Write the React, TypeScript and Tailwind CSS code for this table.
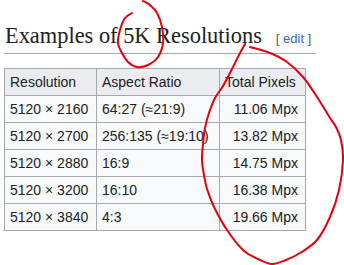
import React from 'react';

const rows = [
  ['5120 × 2160', '64:27 (≈21:9)', '11.06 Mpx'],
  ['5120 × 2700', '256:135 (≈19:10)', '13.82 Mpx'],
  ['5120 × 2880', '16:9', '14.75 Mpx'],
  ['5120 × 3200', '16:10', '16.38 Mpx'],
  ['5120 × 3840', '4:3', '19.66 Mpx'],
];

// hand-drawn marks, traced as point lists and smoothed
const smooth = (pts: number[][]) => {
  let d = `M${pts[0][0]},${pts[0][1]}`;
  for (let i = 0; i < pts.length - 1; i++) {
    const p0 = pts[i - 1] || pts[i];
    const p1 = pts[i];
    const p2 = pts[i + 1];
    const p3 = pts[i + 2] || p2;
    const c1 = [p1[0] + (p2[0] - p0[0]) / 6, p1[1] + (p2[1] - p0[1]) / 6];
    const c2 = [p2[0] - (p3[0] - p1[0]) / 6, p2[1] - (p3[1] - p1[1]) / 6];
    d += ` C${c1[0]},${c1[1]} ${c2[0]},${c2[1]} ${p2[0]},${p2[1]}`;
  }
  return d;
};

const ring1 = [
  [132, 13], [125, 18], [120, 30], [118, 43], [122, 53], [128, 62], [137, 67],
  [148, 65], [158, 57], [163, 43], [162, 27], [157, 13], [150, 5], [143, 1],
];

const ring2 = [
  [245, 44], [239, 55], [233, 67], [223, 86], [215, 98], [209, 113], [205, 128],
  [203, 144], [202, 160], [204, 175], [207, 189], [214, 207], [227, 230], [243, 250],
  [258, 259], [272, 264], [286, 260], [300, 253], [317, 240], [330, 217], [339, 190],
  [343, 160], [341, 140], [336, 127], [330, 118], [317, 97], [303, 77], [287, 62],
  [270, 53], [250, 47],
];

export default function App() {
  return (
    <div className="relative w-[344px] h-[265px] overflow-hidden bg-white text-[#202122]">
      <h2 className="ml-[4px] w-[312px] pt-[22px] leading-[28px] border-b border-[#a2a9b1] font-['Liberation_Serif',serif] text-[22.4px] font-normal pl-[1px]">
        Examples of 5K Resolutions
        <span className="ml-[14px] font-['Liberation_Sans',Arial,sans-serif] text-[13px] text-[#54595d]">
          [ <span className="text-[#3366cc]">edit</span> ]
        </span>
      </h2>

      <table className="mt-[14px] ml-[4px] border-collapse border border-[#a2a9b1] font-['Liberation_Sans',Arial,sans-serif] text-[14px] bg-[#f8f9fa]">
        <thead>
          <tr className="h-[27px] bg-[#eaecf0]">
            <th className="w-[92px] border border-[#a2a9b1] px-[5px] text-left font-normal">Resolution</th>
            <th className="w-[123px] border border-[#a2a9b1] px-[5px] text-left font-normal">Aspect Ratio</th>
            <th className="w-[86px] border border-[#a2a9b1] px-[5px] text-left font-normal">Total Pixels</th>
          </tr>
        </thead>
        <tbody>
          {rows.map((r) => (
            <tr key={r[0]} className="h-[27px]">
              <td className="border border-[#a2a9b1] px-[5px] whitespace-nowrap">{r[0]}</td>
              <td className="border border-[#a2a9b1] px-[5px] whitespace-nowrap">{r[1]}</td>
              <td className="border border-[#a2a9b1] pl-[5px] pr-[7px] text-right whitespace-nowrap">{r[2]}</td>
            </tr>
          ))}
        </tbody>
      </table>

      <svg className="pointer-events-none absolute inset-0" width="344" height="265" viewBox="0 0 344 265" fill="none">
        <path d={smooth(ring1)} stroke="#e3000f" strokeWidth="2" strokeLinecap="round" strokeLinejoin="round" />
        <path d={smooth(ring2)} stroke="#e3000f" strokeWidth="2" strokeLinecap="round" strokeLinejoin="round" />
      </svg>
    </div>
  );
}
